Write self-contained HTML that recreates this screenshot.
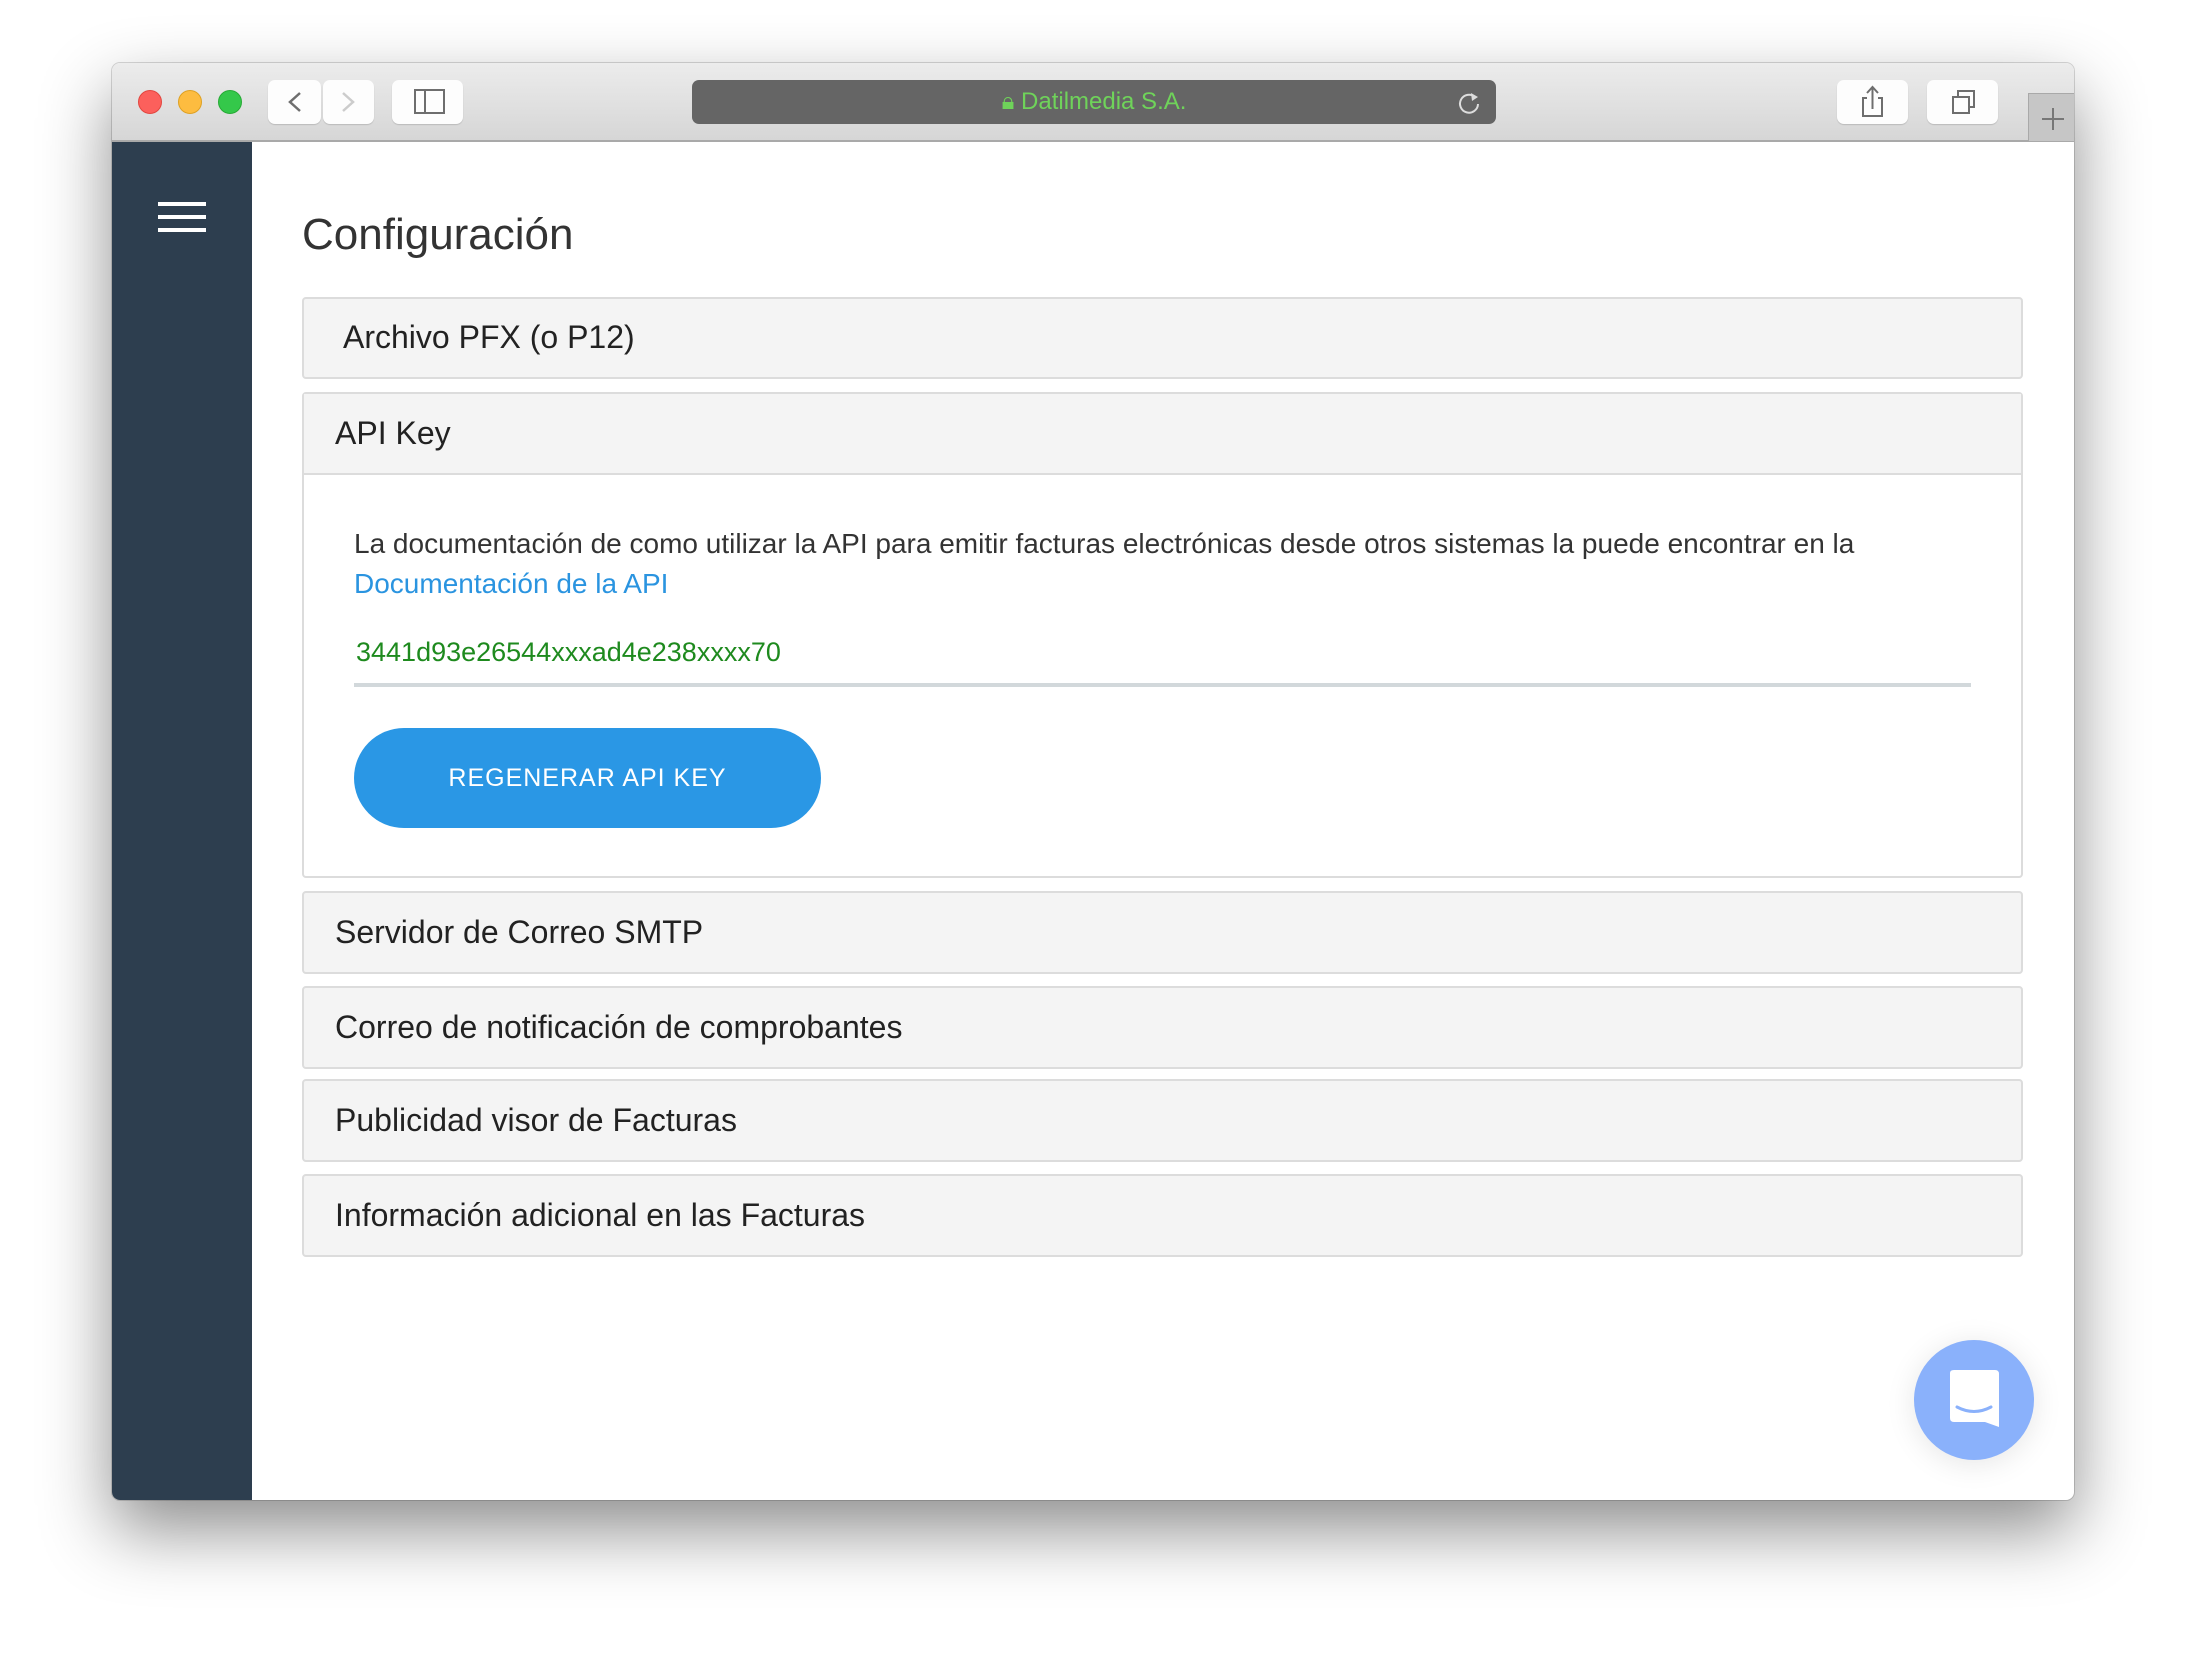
<!DOCTYPE html>
<html><head><meta charset="utf-8"><style>
*{margin:0;padding:0;box-sizing:border-box}
body{width:2186px;height:1660px;background:#fff;position:relative;overflow:hidden;font-family:"Liberation Sans",sans-serif}
.win{position:absolute;left:112px;top:63px;width:1962px;height:1437px;border-radius:8px;overflow:hidden;box-shadow:0 30px 70px rgba(0,0,0,.45),0 0 0 1px rgba(0,0,0,.15);background:#fff}
.tb{position:absolute;left:0;top:0;width:100%;height:79px;background:linear-gradient(#ececec,#d6d6d6);border-bottom:2px solid #a9a9a9}
.dot{position:absolute;top:27px;width:24px;height:24px;border-radius:50%}
.btn{position:absolute;top:17px;height:44px;background:#fdfdfd;border-radius:7px;box-shadow:0 1px 1px rgba(0,0,0,.15)}
.url{position:absolute;left:580px;top:17px;width:804px;height:44px;background:#656565;border-radius:7px;color:#6fd35a;font-size:24px;text-align:center;line-height:44px}
.side{position:absolute;left:0;top:79px;width:140px;bottom:0;background:#2d3e4f}
.hb{position:absolute;left:46px;width:48px;height:4px;background:#fff}
.main{position:absolute;left:140px;top:79px;right:0;bottom:0}
h1{position:absolute;left:50px;top:68px;font-weight:normal;font-size:44px;color:#333}
.p{position:absolute;left:50px;width:1721px;background:#f4f4f4;border:2px solid #dcdcdc;border-radius:4px}
.p span{position:absolute;left:31px;top:50%;transform:translateY(-52%);font-size:32px;color:#222}
</style></head><body>
<div class="win">
 <div class="tb">
  <div class="dot" style="left:26px;background:#fc605c;border:1px solid #e2463f"></div>
  <div class="dot" style="left:66px;background:#fdbc40;border:1px solid #dea123"></div>
  <div class="dot" style="left:106px;background:#34c84a;border:1px solid #27aa35"></div>
  <div class="btn" style="left:156px;width:53px"><svg width="53" height="44"><path d="M32 13 L22 22 L32 31" fill="none" stroke="#6e6e6e" stroke-width="2.5"/></svg></div>
  <div class="btn" style="left:211px;width:51px"><svg width="51" height="44"><path d="M20 13 L30 22 L20 31" fill="none" stroke="#ccc" stroke-width="2.5"/></svg></div>
  <div class="btn" style="left:280px;width:71px"><svg width="71" height="44"><rect x="23" y="10" width="29" height="23" fill="none" stroke="#6e6e6e" stroke-width="2"/><line x1="33" y1="10" x2="33" y2="33" stroke="#6e6e6e" stroke-width="2"/></svg></div>
  <div class="url">&#128274;&#xFE0E; Datilmedia S.A.<svg style="position:absolute;right:14px;top:10px" width="26" height="26"><path d="M19 7 A9 9 0 1 0 22 14" fill="none" stroke="#ddd" stroke-width="2"/><path d="M15 3 L22 7 L16 11Z" fill="#ddd"/></svg></div>
  <div class="btn" style="left:1725px;width:71px"><svg width="71" height="44"><path d="M30 18 H26 V36 H45 V18 H41 M35.5 29 V8 M30 13 L35.5 7 L41 13" fill="none" stroke="#6e6e6e" stroke-width="2"/></svg></div>
  <div class="btn" style="left:1815px;width:71px"><svg width="71" height="44"><rect x="26" y="17" width="16" height="16" fill="none" stroke="#6e6e6e" stroke-width="2"/><path d="M31 17 V11 H47 V27 H42" fill="none" stroke="#6e6e6e" stroke-width="2"/></svg></div>
  <div style="position:absolute;left:1916px;top:30px;width:50px;height:49px;background:#c6c6c6;border:1px solid #a9a9a9"><svg width="48" height="48"><path d="M24 14 V36 M13 25 H35" stroke="#777" stroke-width="2"/></svg></div>
 </div>
 <div class="side"><div class="hb" style="top:60px"></div><div class="hb" style="top:73px"></div><div class="hb" style="top:86px"></div></div>
 <div class="main">
  <h1>Configuración</h1>
  <div class="p" style="top:155px;height:82px"><span style="left:39px">Archivo PFX (o P12)</span></div>
  <div class="p" style="top:250px;height:486px;background:#fff">
   <div style="position:absolute;left:0;top:0;right:0;height:81px;background:#f4f4f4;border-bottom:2px solid #dcdcdc"><span>API Key</span></div>
   <div style="position:absolute;left:50px;top:130px;font-size:28px;color:#333;line-height:40px;white-space:nowrap">La documentación de como utilizar la API para emitir facturas electrónicas desde otros sistemas la puede encontrar en la<br><span style="position:static;transform:none;font-size:28px;color:#2a94e0">Documentación de la API</span></div>
   <div style="position:absolute;left:52px;top:243px;font-size:27px;color:#1e8a1e">3441d93e26544xxxad4e238xxxx70</div>
   <div style="position:absolute;left:50px;top:289px;width:1617px;height:4px;background:#d2d8db"></div>
   <div style="position:absolute;left:50px;top:334px;width:467px;height:100px;border-radius:50px;background:#2a97e5;color:#fff;font-size:25px;letter-spacing:1px;text-align:center;line-height:100px">REGENERAR API KEY</div>
  </div>
  <div class="p" style="top:749px;height:83px"><span>Servidor de Correo SMTP</span></div>
  <div class="p" style="top:844px;height:83px"><span>Correo de notificación de comprobantes</span></div>
  <div class="p" style="top:937px;height:83px"><span>Publicidad visor de Facturas</span></div>
  <div class="p" style="top:1032px;height:83px"><span>Información adicional en las Facturas</span></div>
  <div style="position:absolute;left:1662px;top:1198px;width:120px;height:120px;border-radius:50%;background:#8ab1fb;box-shadow:0 4px 30px rgba(0,0,0,.1)">
   <svg width="120" height="120"><path d="M36 33 Q36 30 40 30 H81 Q85 30 85 34 V87 L71 82 H40 Q36 82 36 78Z" fill="#fff"/><path d="M43 67 Q60 76 77 67" fill="none" stroke="#8ab1fb" stroke-width="3" stroke-linecap="round"/></svg>
  </div>
 </div>
</div>
</body></html>
